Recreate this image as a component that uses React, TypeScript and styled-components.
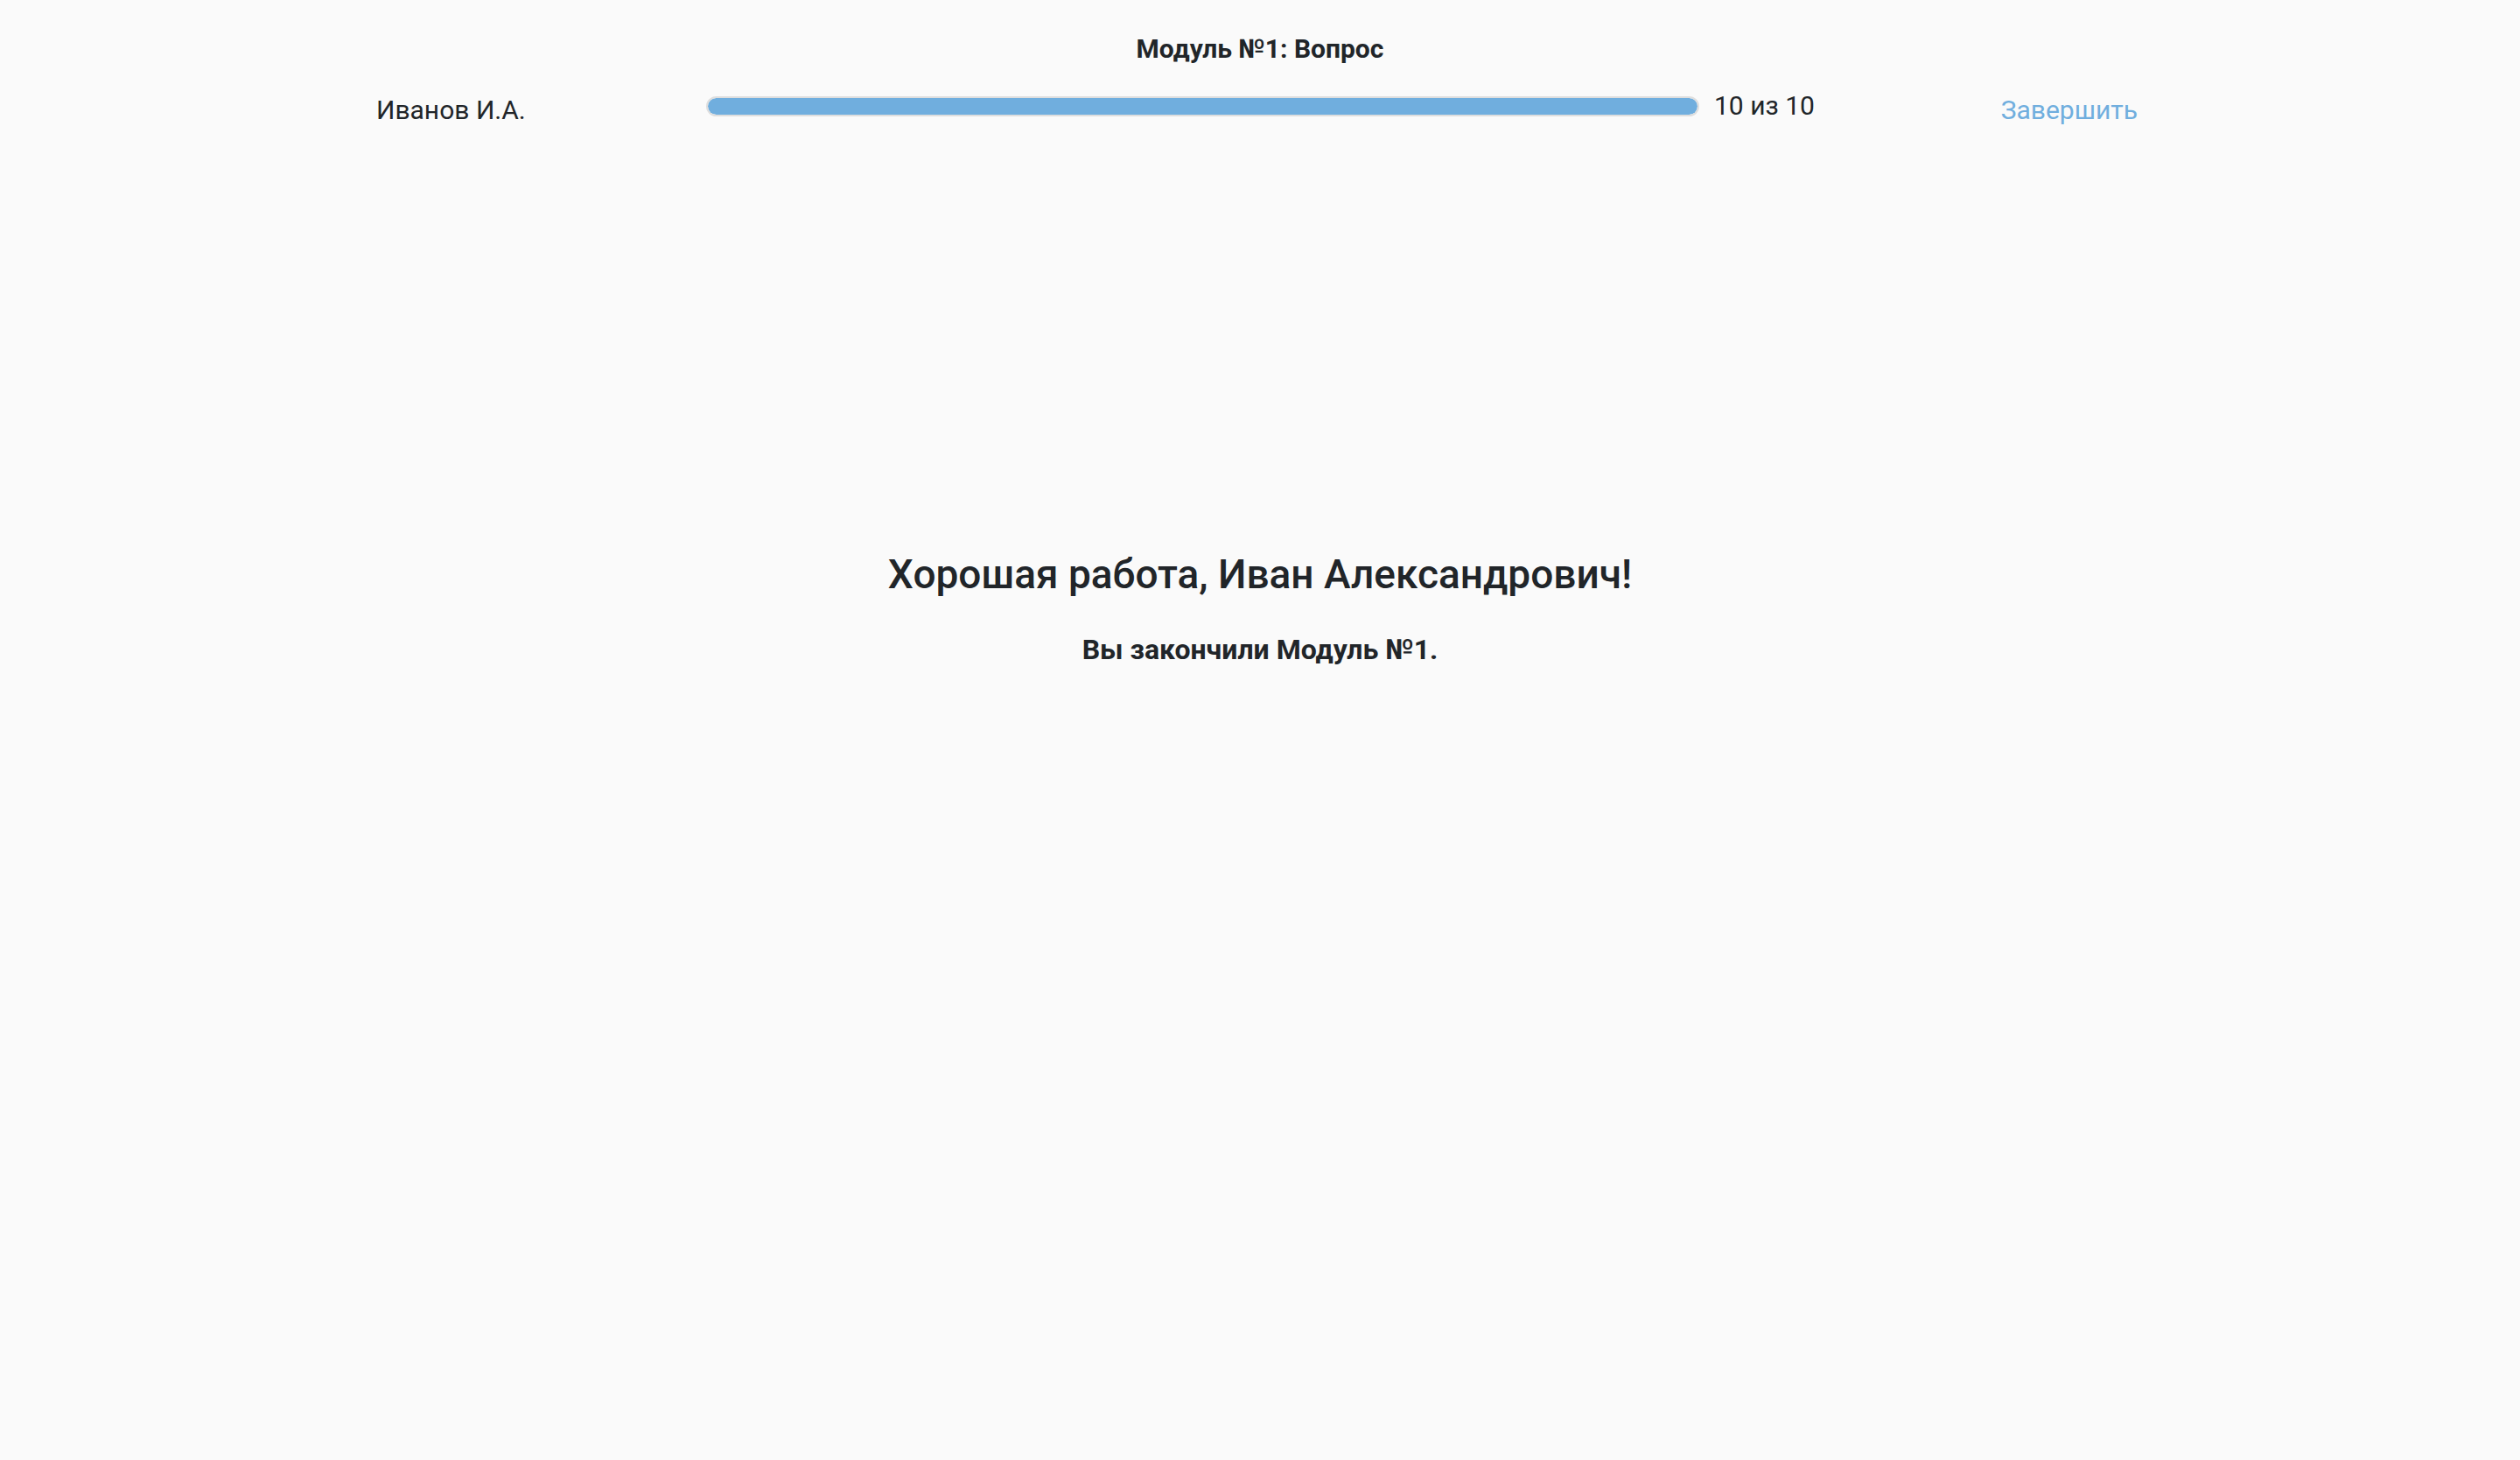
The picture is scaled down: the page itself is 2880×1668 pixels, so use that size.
import React from "react";
import styled, { createGlobalStyle } from "styled-components";

const GlobalStyle = createGlobalStyle`
  html, body {
    margin: 0;
    padding: 0;
    background: #fafafa;
  }
  body {
    font-family: Roboto, "Noto Sans", "Liberation Sans", sans-serif;
    color: #212529;
  }
`;

const Page = styled.div`
  min-height: 1668px;
  background: #fafafa;
  display: flex;
  flex-direction: column;
  align-items: center;
`;

const Title = styled.h1`
  margin: 38px 0 0;
  font-size: 30px;
  line-height: 36px;
  font-weight: 700;
  color: #212529;
  text-align: center;
`;

const Header = styled.div`
  width: 2020px;
  margin-top: 26px;
  display: flex;
  align-items: flex-start;
  height: 46px;
`;

const Name = styled.div<{ $offset: number }>`
  width: 377px;
  margin-top: ${(p) => p.$offset}px;
  font-size: 30px;
  line-height: 36px;
  color: #212529;
`;

const Track = styled.div<{ $offset: number }>`
  width: 1135px;
  height: 23px;
  margin-top: ${(p) => p.$offset}px;
  box-sizing: border-box;
  border: 2px solid #dedede;
  border-radius: 12px;
  background: #e9ecef;
  overflow: hidden;
  display: flex;
`;

const Fill = styled.div`
  height: 100%;
  background: #70aede;
  border-radius: 10px;
`;

const Count = styled.div<{ $offset: number }>`
  margin-left: 17px;
  margin-top: ${(p) => p.$offset}px;
  font-size: 30px;
  line-height: 36px;
  color: #212529;
`;

const FinishLink = styled.a<{ $offset: number }>`
  margin-left: auto;
  margin-right: 7px;
  margin-top: ${(p) => p.$offset}px;
  font-size: 30px;
  line-height: 36px;
  color: #70aede;
  text-decoration: none;
  cursor: pointer;
`;

const Result = styled.section`
  margin-top: 483px;
  display: flex;
  flex-direction: column;
  align-items: center;
`;

const Heading = styled.h2`
  margin: 0;
  font-size: 46px;
  line-height: 55px;
  font-weight: 500;
  color: #212529;
`;

const Sub = styled.p`
  margin: 39px 0 0;
  font-size: 32px;
  line-height: 38px;
  font-weight: 700;
  color: #212529;
`;

export default function App() {
  const current = 10;
  const total = 10;
  return (
    <>
      <GlobalStyle />
      <Page>
        <Title>Модуль №1: Вопрос</Title>
        <Header>
          <Name $offset={8}>Иванов И.А.</Name>
          <Track $offset={10}>
            <Fill style={{ width: `${(current / total) * 100}%` }} />
          </Track>
          <Count $offset={3}>
            {current} из {total}
          </Count>
          <FinishLink $offset={8}>Завершить</FinishLink>
        </Header>
        <Result>
          <Heading>Хорошая работа, Иван Александрович!</Heading>
          <Sub>Вы закончили Модуль №1.</Sub>
        </Result>
      </Page>
    </>
  );
}
